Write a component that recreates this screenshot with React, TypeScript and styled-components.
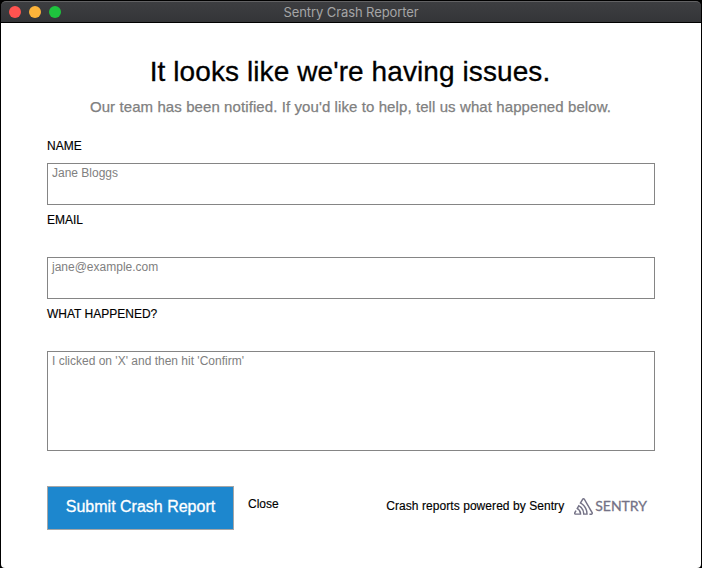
import React from "react";
import styled, { createGlobalStyle } from "styled-components";
import { SiSentry } from "react-icons/si";

const GlobalStyle = createGlobalStyle`
  *, *::before, *::after { box-sizing: border-box; }
  html, body { margin: 0; padding: 0; background: #000; overflow: hidden; }
  body {
    font-family: "Liberation Sans", Arial, sans-serif;
    color: #000;
    -webkit-text-stroke: 0.15px currentColor;
  }
`;

const Window = styled.div`
  display: flex;
  flex-direction: column;
  width: 702px;
  height: 568px;
  padding: 1px 1px 0;
  background: #000;
`;

const TitleBar = styled.header`
  display: grid;
  grid-template-columns: 1fr auto 1fr;
  align-items: center;
  height: 21px;
  flex: none;
  margin-bottom: 1px;
  padding: 0 8px;
  border-top: 1px solid #626264;
  border-radius: 5px 5px 0 0;
  background: linear-gradient(#3d3e41, #343538);
`;

const Lights = styled.div`
  display: flex;
  gap: 8px;
`;

const Light = styled.span<{ $color: string }>`
  width: 12px;
  height: 12px;
  border-radius: 50%;
  background: ${(p) => p.$color};
`;

const WindowTitle = styled.span`
  font: 400 13px/20px Inter, sans-serif;
  letter-spacing: -0.09px;
  color: #a5a5a6;
  -webkit-text-stroke: 0;
`;

const Content = styled.main`
  flex: 1;
  padding: 33px 46px 0;
  background: #fff;
  border-radius: 0 0 4px 4px;
`;

const Heading = styled.h1`
  margin: 0;
  padding-right: 2px;
  font-size: 28px;
  font-weight: 400;
  line-height: 32px;
  letter-spacing: 0.09px;
  text-align: center;
  white-space: nowrap;
  -webkit-text-stroke: 0.3px currentColor;
`;

const Subtitle = styled.p`
  margin: 9px 0 21px;
  padding-right: 1px;
  font-size: 15px;
  line-height: 20px;
  letter-spacing: 0.09px;
  text-align: center;
  white-space: nowrap;
  color: #808080;
  -webkit-text-stroke: 0.25px currentColor;
`;

const Field = styled.label<{ $gap: number }>`
  display: flex;
  flex-direction: column;
  gap: ${(p) => p.$gap}px;
  margin-bottom: 7px;
`;

const Label = styled.span`
  font-size: 12px;
  line-height: 16px;
`;

const Input = styled.textarea<{ $height: number }>`
  display: block;
  width: 100%;
  height: ${(p) => p.$height}px;
  margin: 0;
  padding: 1px 4px;
  border: 1px solid #858585;
  border-radius: 0;
  outline: none;
  resize: none;
  background: #fff;
  font: 12px/16px "Liberation Sans", Arial, sans-serif;
  -webkit-text-stroke: 0;
  &::placeholder { color: #808080; opacity: 1; }
`;

const Footer = styled.footer`
  display: flex;
  align-items: flex-start;
  margin-top: 35px;
`;

const SubmitButton = styled.button`
  width: 187px;
  height: 44px;
  padding: 0 0 3px;
  border: 1px solid #a6a6a6;
  background: #1d87ce;
  color: #fff;
  font: 16px/20px "Liberation Sans", Arial, sans-serif;
  white-space: nowrap;
  -webkit-text-stroke: 0.3px currentColor;
`;

const CloseButton = styled.button`
  margin: 10px 0 0 14px;
  padding: 0;
  border: 0;
  background: none;
  color: #000;
  font: 12px/16px "Liberation Sans", Arial, sans-serif;
`;

const Credit = styled.div`
  display: flex;
  align-items: center;
  height: 16px;
  margin: 12px 8px 0 auto;
  font-size: 12px;
  line-height: 16px;
  letter-spacing: 0.06px;
  white-space: nowrap;
`;

const Brand = styled.span`
  display: flex;
  align-items: center;
  gap: 2px;
  margin-left: 10px;
  color: #747286;
`;

const Wordmark = styled.span`
  font: 400 14px/16px Lato, sans-serif;
  letter-spacing: 0;
  -webkit-text-stroke: 0.3px currentColor;
`;

const fields = [
  { label: "NAME", placeholder: "Jane Bloggs", height: 42, gap: 9 },
  { label: "EMAIL", placeholder: "jane@example.com", height: 42, gap: 29 },
  { label: "WHAT HAPPENED?", placeholder: "I clicked on 'X' and then hit 'Confirm'", height: 100, gap: 29 },
];

export default function App() {
  return (
    <Window>
      <GlobalStyle />
      <TitleBar>
        <Lights>
          <Light $color="#ff5350" />
          <Light $color="#fdb43a" />
          <Light $color="#1ec43e" />
        </Lights>
        <WindowTitle>Sentry Crash Reporter</WindowTitle>
      </TitleBar>
      <Content>
        <Heading>It looks like we're having issues.</Heading>
        <Subtitle>Our team has been notified. If you'd like to help, tell us what happened below.</Subtitle>
        {fields.map((f) => (
          <Field key={f.label} $gap={f.gap}>
            <Label>{f.label}</Label>
            <Input $height={f.height} placeholder={f.placeholder} spellCheck={false} />
          </Field>
        ))}
        <Footer>
          <SubmitButton type="button">Submit Crash Report</SubmitButton>
          <CloseButton type="button">Close</CloseButton>
          <Credit>
            Crash reports powered by Sentry
            <Brand>
              <SiSentry size={19} />
              <Wordmark>SENTRY</Wordmark>
            </Brand>
          </Credit>
        </Footer>
      </Content>
    </Window>
  );
}
